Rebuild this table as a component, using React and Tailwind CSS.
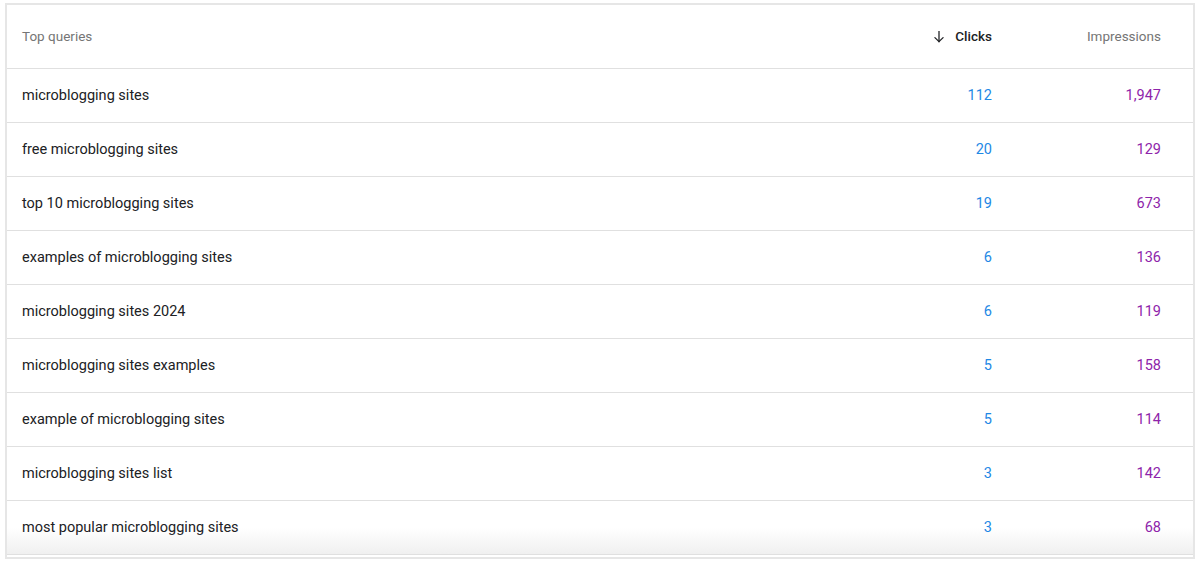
import React from "react";

const rows = [
  ["microblogging sites", "112", "1,947"],
  ["free microblogging sites", "20", "129"],
  ["top 10 microblogging sites", "19", "673"],
  ["examples of microblogging sites", "6", "136"],
  ["microblogging sites 2024", "6", "119"],
  ["microblogging sites examples", "5", "158"],
  ["example of microblogging sites", "5", "114"],
  ["microblogging sites list", "3", "142"],
  ["most popular microblogging sites", "3", "68"],
];

export default function App() {
  return (
    <div className="w-[1200px] h-[563px] bg-white pt-[3px] pl-[5px]" style={{ fontFamily: "Roboto, 'Noto Sans', Arial, sans-serif" }}>
      <div className="w-[1190px] border-2 border-[#e6e6e6] pb-[2px]">
        <div className="grid grid-cols-[1fr_169px_169px] pr-[32px] h-[64px] items-center border-b border-[#e0e0e0] text-[13.5px]">
          <div className="pl-[15px] text-[#757575]">Top queries</div>
          <div className="flex items-center justify-end gap-[9px] text-[#202124] font-medium">
            <svg width="14" height="14" viewBox="0 0 24 24" fill="none" stroke="#202124" strokeWidth="2.2" strokeLinecap="square">
              <path d="M12 3v17" />
              <path d="M5 13l7 7 7-7" strokeLinecap="round" strokeLinejoin="round" />
            </svg>
            <span>Clicks</span>
          </div>
          <div className="text-right text-[#757575]">Impressions</div>
        </div>
        {rows.map(([q, c, i], idx) => (
          <div
            key={idx}
            className={
              "grid grid-cols-[1fr_169px_169px] pr-[32px] h-[54px] items-center border-b border-[#e0e0e0] text-[14.5px] " +
              (idx === rows.length - 1 ? "bg-gradient-to-b from-white via-white to-[#f0f0f0]" : "")
            }
          >
            <div className="pl-[15px] text-[#202124]">{q}</div>
            <div className="text-right text-[#1e88e5]">{c}</div>
            <div className="text-right text-[#8e24aa]">{i}</div>
          </div>
        ))}
      </div>
    </div>
  );
}
